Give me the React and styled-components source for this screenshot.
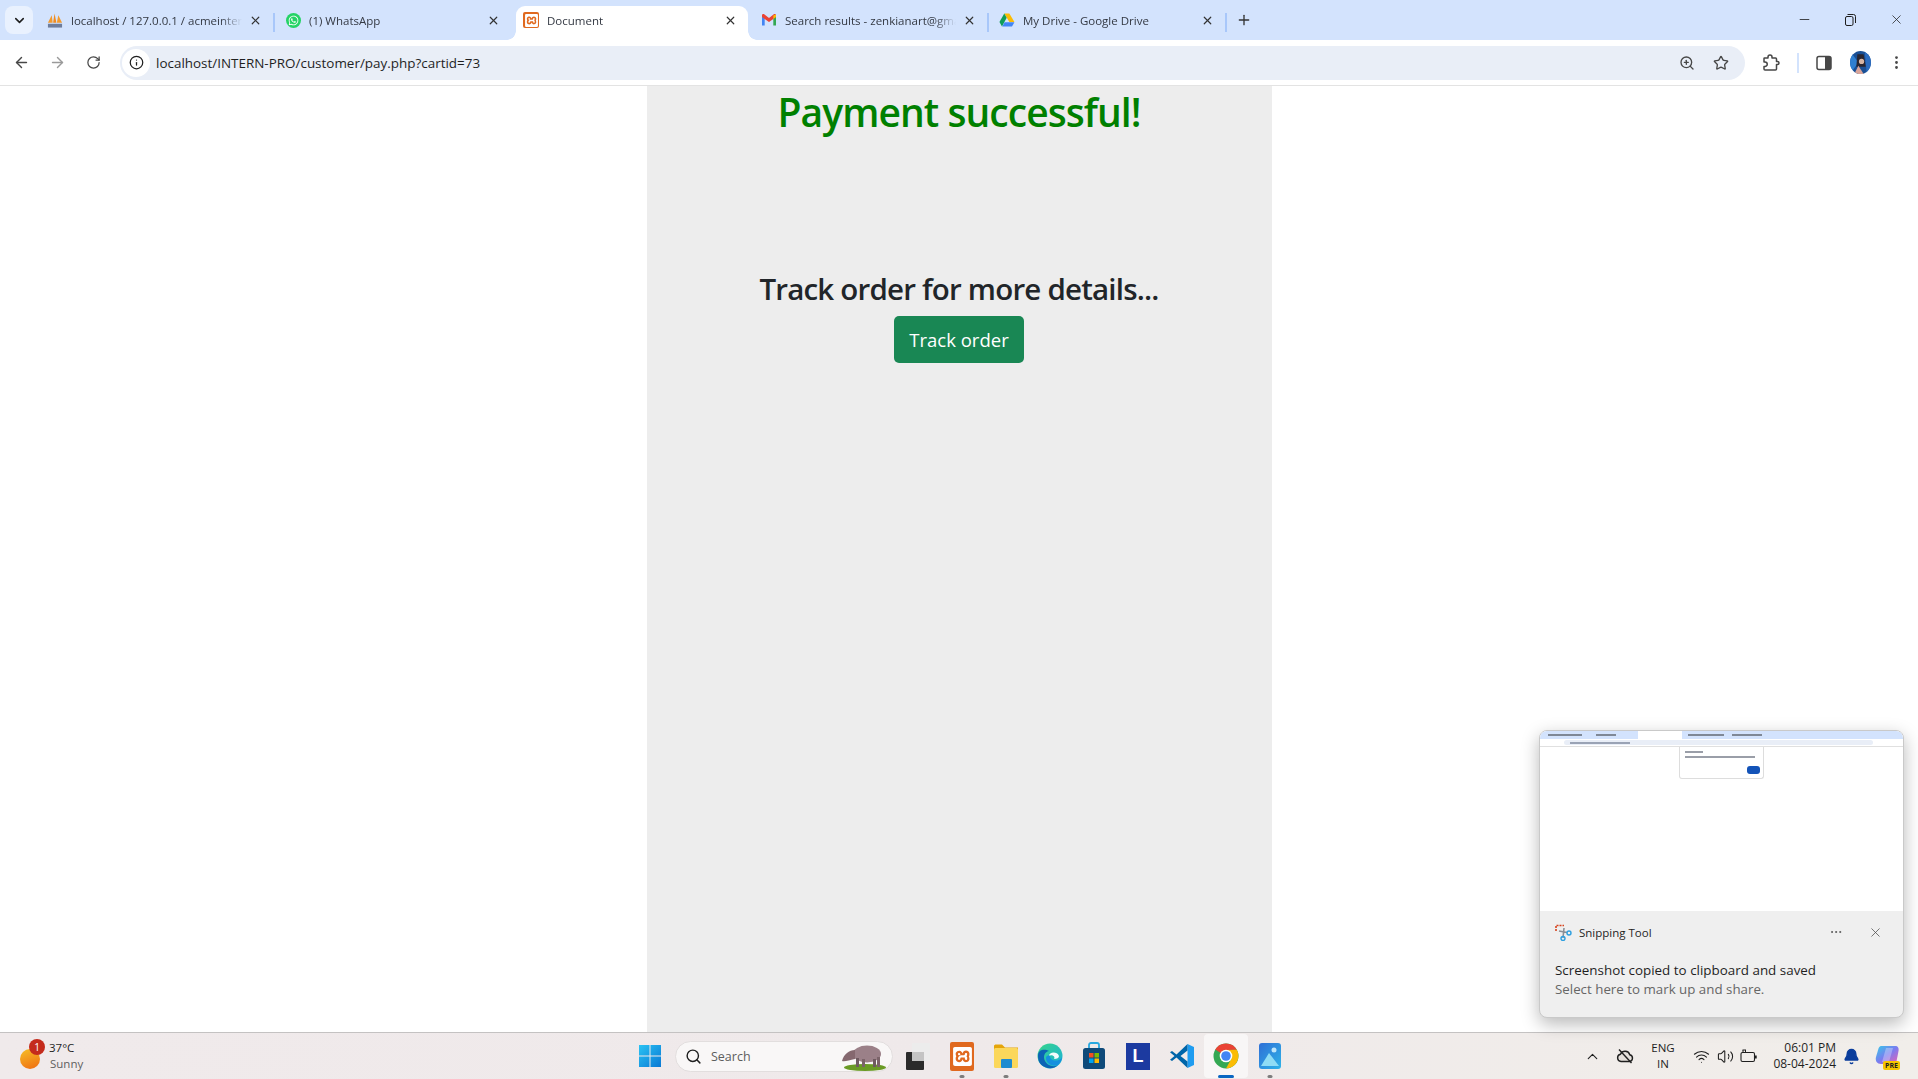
import React from 'react';
import styled, { createGlobalStyle } from 'styled-components';
import {
  ArrowLeft, ArrowRight, RotateCw, Info, ZoomIn, Star, MoreVertical, X, Plus, Minus,
  ChevronDown, ChevronUp, Search, Wifi, Volume2, Bell, MoreHorizontal,
} from 'lucide-react';
import { FaWhatsapp } from 'react-icons/fa';
import { SiXampp } from 'react-icons/si';

const UI_FONT = '"Open Sans", "Noto Sans", sans-serif';

const GlobalStyle = createGlobalStyle`
  html, body { margin: 0; padding: 0; height: 100%; overflow: hidden; background: #fff; }
  #root { height: 100%; }
  * { box-sizing: border-box; }
  body { font-family: ${UI_FONT}; color: #1f1f1f; }
`;

/* ---------- drawn logos ---------- */

const PmaIcon = () => (
  <svg width="17" height="17" viewBox="0 0 17 17">
    <path d="M1 11 L5 3 L6 11Z" fill="#f29a2e" />
    <path d="M6.5 11 L8 1 L10 11Z" fill="#ef8a1f" />
    <path d="M10.5 11 L12 3 L16 11Z" fill="#f29a2e" />
    <rect x="1" y="12" width="15" height="4" fill="#5b6b8c" opacity="0.85" />
  </svg>
);

const GmailIcon = ({ size = 16 }) => (
  <svg width={size} height={size} viewBox="0 0 16 16">
    <path d="M1 3.2 V13.5 H3.7 V6.6Z" fill="#4285f4" />
    <path d="M15 3.2 V13.5 H12.3 V6.6Z" fill="#34a853" />
    <path d="M1 3.5 C1 2 2.6 1.8 3.5 2.5 L8 6 L12.5 2.5 C13.4 1.8 15 2 15 3.5 L15 5 L12.3 7 L8 10 L3.7 7 L1 5Z" fill="#ea4335" />
    <path d="M12.3 3.4 L15 2.6 V5 L12.3 7Z" fill="#fbbc04" />
  </svg>
);

const DriveIcon = () => (
  <svg width="17" height="16" viewBox="0 0 17 16">
    <path d="M5.6 1 H11 L16.4 10 H11Z" fill="#fbbc04" />
    <path d="M5.6 1 L0.5 10 L3.2 15 L8.2 5.5Z" fill="#0f9d58" />
    <path d="M6 10.4 H16.4 L13.8 15 H3.4Z" fill="#4285f4" />
  </svg>
);

const WindowsLogo = () => (
  <svg width="24" height="24" viewBox="0 0 24 24">
    <defs>
      <linearGradient id="win" x1="0" y1="0" x2="1" y2="1">
        <stop offset="0" stopColor="#2bc3f3" />
        <stop offset="1" stopColor="#0a78d4" />
      </linearGradient>
    </defs>
    <path d="M1 1 H11.5 V11.5 H1Z M12.5 1 H23 V11.5 H12.5Z M1 12.5 H11.5 V23 H1Z M12.5 12.5 H23 V23 H12.5Z" fill="url(#win)" />
  </svg>
);

const TapirPicture = () => (
  <svg width="46" height="30" viewBox="0 0 46 30">
    <ellipse cx="24" cy="26.5" rx="21" ry="3.5" fill="#6a9a25" />
    <ellipse cx="26" cy="13" rx="14" ry="8.5" fill="#9b8088" />
    <path d="M14 9 C8 9 3 13 1 20 C4 21 8 19 14 18Z" fill="#85686f" />
    <rect x="15" y="17" width="3" height="9" fill="#6f5a60" />
    <rect x="21" y="18" width="3" height="8" fill="#7b6369" />
    <rect x="32" y="18" width="3" height="8" fill="#6f5a60" />
    <rect x="36" y="16" width="3" height="10" fill="#7b6369" />
  </svg>
);

const TaskView = () => (
  <svg width="26" height="28" viewBox="0 0 26 28">
    <rect x="1" y="10" width="18" height="18" rx="1" fill="#2b2b2b" />
    <rect x="7" y="1" width="18" height="18" rx="1" fill="#ececec" />
    <rect x="7" y="10" width="12" height="9" fill="#c4c4c4" />
  </svg>
);

const XamppTask = () => (
  <OrangeSquare $size={24}><SiXampp size={19} color="#fff" /></OrangeSquare>
);

const FolderIcon = () => (
  <svg width="26" height="26" viewBox="0 0 26 26">
    <path d="M1 3 C1 2 2 1.500 3 1.500 H9 L12 4.500 H25 V7 H1Z" fill="#e5a50a" />
    <rect x="1" y="5" width="24" height="20" rx="1.500" fill="#fbd75b" />
    <rect x="8" y="16" width="11" height="9" rx="1" fill="#1f8bd0" />
  </svg>
);

const EdgeIcon = () => (
  <svg width="26" height="26" viewBox="0 0 26 26">
    <defs>
      <linearGradient id="edgeA" x1="0" y1="0" x2="1" y2="1">
        <stop offset="0" stopColor="#37d58a" />
        <stop offset="1" stopColor="#1bb0d8" />
      </linearGradient>
    </defs>
    <circle cx="13" cy="13" r="12.500" fill="url(#edgeA)" />
    <path d="M1 13 C1 6 8 6 12 8 C7 9 6 14 8 18 C10 22 16 25 21 22 C17 26 12 26 8 24 C3 22 1 18 1 13Z" fill="#0c63b5" />
    <path d="M12 13 C12 9 20 8 22 13 C22 15 20 16 17 16 C19 13 14 11 12 13Z" fill="#fff" opacity="0.95" />
    <path d="M9 15 C9 21 16 24 21 22 C23 20 25 17 25 14 C24 17 20 18 17 17.500 C14 17 13 15 13 13 C11 12 9 13 9 15Z" fill="#1490df" />
  </svg>
);

const StoreIcon = () => (
  <svg width="24" height="28" viewBox="0 0 24 28">
    <path d="M7 7 V3 C7 1.500 8 1 9 1 H15 C16 1 17 1.500 17 3 V7" fill="none" stroke="#28a8e0" strokeWidth="1.800" />
    <rect x="1" y="6" width="22" height="21" rx="2.500" fill="#0f4a7a" />
    <rect x="7" y="11" width="4.500" height="4.500" fill="#f25022" />
    <rect x="12.500" y="11" width="4.500" height="4.500" fill="#7fba00" />
    <rect x="7" y="16.500" width="4.500" height="4.500" fill="#00a4ef" />
    <rect x="12.500" y="16.500" width="4.500" height="4.500" fill="#ffb900" />
  </svg>
);

const VsCodeIcon = () => (
  <svg width="26" height="26" viewBox="0 0 26 26">
    <path d="M18.500 1 L25 4 V22 L18.500 25 L18.500 1Z" fill="#1f9cf0" />
    <path d="M18.500 1 L7.500 11.500 L3 8 L1 9.200 L5.500 13 L1 16.800 L3 18 L7.500 14.500 L18.500 25 V18.500 L11.500 13 L18.500 7.500Z" fill="#0065a9" />
  </svg>
);

const ChromeIcon = () => (
  <svg width="26" height="26" viewBox="0 0 26 26">
    <circle cx="13" cy="13" r="12.500" fill="#34a853" />
    <path d="M13 .5 A12.500 12.500 0 0 1 23.800 6.800 L13 7 A6 6 0 0 0 7.800 10 L2.200 6.600 A12.500 12.500 0 0 1 13 .5Z" fill="#ea4335" />
    <path d="M23.800 6.800 A12.500 12.500 0 0 1 13 25.500 L18.200 16 A6 6 0 0 0 18.200 10 L13 7Z" fill="#fbbc04" />
    <circle cx="13" cy="13" r="6.300" fill="#fff" />
    <circle cx="13" cy="13" r="4.800" fill="#4285f4" />
  </svg>
);

const PhotosIcon = () => (
  <svg width="22" height="28" viewBox="0 0 22 28">
    <defs>
      <linearGradient id="ph" x1="0" y1="0" x2="1" y2="1">
        <stop offset="0" stopColor="#2f6fd6" />
        <stop offset="1" stopColor="#2fb3e8" />
      </linearGradient>
    </defs>
    <rect x="0" y="1" width="22" height="26" rx="3" fill="url(#ph)" />
    <circle cx="15" cy="8" r="2.500" fill="#bfe6fa" />
    <path d="M2 24 L10 11 L20 24Z" fill="#8fdcf5" />
  </svg>
);

const SnipIcon = () => (
  <svg width="17" height="17" viewBox="0 0 17 17">
    <path d="M1 7 V1.500 H9" fill="none" stroke="#d7421b" strokeWidth="1.600" strokeDasharray="2 1" />
    <path d="M4 7 L12 8.500 M9 4 L8 14" stroke="#8a8f96" strokeWidth="1.600" />
    <circle cx="14" cy="9" r="2" fill="none" stroke="#2d9fe0" strokeWidth="1.400" />
    <circle cx="8" cy="14.500" r="2" fill="none" stroke="#2d9fe0" strokeWidth="1.400" />
  </svg>
);

const CopilotIcon = () => (
  <svg width="24" height="22" viewBox="0 0 24 22">
    <defs>
      <linearGradient id="cop" x1="0" y1="0" x2="1" y2="1">
        <stop offset="0" stopColor="#36c9e8" />
        <stop offset="0.5" stopColor="#7a7cf0" />
        <stop offset="1" stopColor="#ee5fb0" />
      </linearGradient>
    </defs>
    <path d="M6 1 H20 C23 1 24 3 23.500 6 L21 19 H6 C2 19 0 16 1 12 L3.500 3.500 C4 2 5 1 6 1Z" fill="url(#cop)" />
    <path d="M11 3 H18 L14 17 H7Z" fill="#fff" opacity="0.3" />
  </svg>
);

const SidePanelIcon = () => (
  <svg width="16" height="16" viewBox="0 0 16 16">
    <rect x="1" y="1.500" width="14" height="13" rx="2" fill="#fff" stroke="#474747" strokeWidth="1.500" />
    <path d="M9 1.500 H13 A2 2 0 0 1 15 3.500 V12.500 A2 2 0 0 1 13 14.500 H9Z" fill="#474747" />
  </svg>
);

const ExtensionIcon = () => (
  <svg width="18" height="18" viewBox="0 0 18 18">
    <path
      d="M2.500 4 H6 V3 A2 2 0 0 1 10 3 V4 H13.500 A1 1 0 0 1 14.500 5 V7.500 H15.500 A1.500 1.500 0 0 1 15.500 10.500 H14.500 V15 A1 1 0 0 1 13.500 16 H3 A1 1 0 0 1 2 15 V12.500 H3 A2 2 0 0 0 3 8 H2 V4.500 A.5 .5 0 0 1 2.500 4Z"
      fill="none"
      stroke="#474747"
      strokeWidth="1.500"
      strokeLinejoin="round"
    />
  </svg>
);

const CloudSlashIcon = () => (
  <svg width="18" height="16" viewBox="0 0 18 16">
    <path d="M5 13.500 A3.700 3.700 0 0 1 4.500 6.200 A5 5 0 0 1 13.800 6.800 A3.400 3.400 0 0 1 13.500 13.500Z" fill="#e4dfdb" stroke="#1f1f1f" strokeWidth="1.400" />
    <path d="M3 1.500 L15.500 15" stroke="#1f1f1f" strokeWidth="1.400" />
  </svg>
);

const BatteryIcon = () => (
  <svg width="18" height="16" viewBox="0 0 18 16">
    <rect x="1" y="4.500" width="13.500" height="9" rx="1.500" fill="none" stroke="#1f1f1f" strokeWidth="1.100" />
    <rect x="15" y="7.500" width="1.700" height="3" fill="#1f1f1f" />
    <path d="M3 5 V2 M5.500 5 V2 M2.500 2 H6" stroke="#1f1f1f" strokeWidth="1" />
  </svg>
);

const RestoreIcon = () => (
  <svg width="11" height="12" viewBox="0 0 11 12">
    <rect x="0.500" y="2.500" width="7.500" height="9" rx="1.500" fill="none" stroke="#1f1f1f" />
    <path d="M2.500 .5 H8.500 A2 2 0 0 1 10.500 2.500 V9" fill="none" stroke="#1f1f1f" />
  </svg>
);

const Avatar = () => (
  <svg width="21" height="23" viewBox="0 0 20 22">
    <defs><clipPath id="av"><ellipse cx="10" cy="11" rx="10" ry="11" /></clipPath></defs>
    <g clipPath="url(#av)">
      <rect width="20" height="22" fill="#1a4f94" />
      <path d="M0 0 L8 11 L0 22Z" fill="#2f7fd0" />
      <path d="M7 3 H13 L15 15 H6Z" fill="#2a2630" />
      <circle cx="11" cy="10" r="2.500" fill="#d8b5a3" />
      <path d="M4 22 L8 14 L13 22Z" fill="#d8a59a" />
      <path d="M14 0 L20 6 V22 H16Z" fill="#2b6cc0" />
    </g>
  </svg>
);

/* ---------- browser chrome ---------- */

const Screen = styled.div`
  height: 100vh;
  display: flex;
  flex-direction: column;
  position: relative;
  overflow: hidden;
`;

const TabStrip = styled.div`
  height: 40px;
  flex: none;
  background: #d3e3fd;
  display: flex;
  align-items: flex-end;
`;

const TabSearch = styled.div`
  width: 28px;
  height: 28px;
  margin: 0 4px 6px 5px;
  border-radius: 8px;
  background: #e9f1fe;
  display: flex;
  align-items: center;
  justify-content: center;
  color: #1f1f1f;
`;

const Tab = styled.div`
  width: ${(p) => (p.$active ? 232 : 238)}px;
  height: 34px;
  flex: none;
  margin: 0 ${(p) => (p.$active ? 3 : 0)}px;
  display: flex;
  align-items: center;
  padding: 0 ${(p) => (p.$active ? 2 : 4)}px 6px ${(p) => (p.$active ? 7 : 10)}px;
  position: relative;
  background: ${(p) => (p.$active ? '#fff' : 'transparent')};
  border-radius: 9px 9px 0 0;
  ${(p) => p.$active && `
    &::before, &::after {
      content: '';
      position: absolute;
      bottom: 0;
      width: 9px;
      height: 9px;
      background: radial-gradient(circle at 0 0, #d3e3fd 8.5px, #fff 9px);
    }
    &::before { left: -9px; }
    &::after { right: -9px; background: radial-gradient(circle at 100% 0, #d3e3fd 8.5px, #fff 9px); }
  `}
  ${(p) => p.$divider && `
    &::after {
      content: '';
      position: absolute;
      right: 0;
      top: 7px;
      width: 2px;
      height: 19px;
      background: #a8c7fa;
    }
  `}
`;

const TabIcon = styled.span`
  width: 16px;
  height: 16px;
  flex: none;
  display: flex;
  align-items: center;
  justify-content: center;
`;

const TabTitle = styled.span`
  padding-left: 8px;
  flex: 1;
  min-width: 0;
  font-size: 11.5px;
  color: #333842;
  white-space: nowrap;
  overflow: hidden;
  -webkit-mask-image: linear-gradient(to right, #000 88%, transparent 100%);
  mask-image: linear-gradient(to right, #000 88%, transparent 100%);
`;

const TabClose = styled.span`
  width: 16px;
  margin: 0 7.5px 0 6px;
  flex: none;
  display: flex;
  justify-content: center;
  color: #333;
`;

const WhatsappBadge = styled.span`
  width: 15px;
  height: 15px;
  border-radius: 50%;
  background: #25d366;
  color: #fff;
  display: flex;
  align-items: center;
  justify-content: center;
`;

const OrangeSquare = styled.span`
  width: ${(p) => p.$size}px;
  height: ${(p) => p.$size + (p.$size > 20 ? 5 : 0)}px;
  border-radius: 2px;
  background: #e0691f;
  display: flex;
  align-items: center;
  justify-content: center;
`;

const NewTab = styled.div`
  width: 34px;
  height: 34px;
  padding-bottom: 6px;
  display: flex;
  align-items: center;
  justify-content: center;
  color: #333;
`;

const WindowControls = styled.div`
  margin-left: auto;
  height: 40px;
  display: flex;
  margin-right: -1px;
`;

const WindowButton = styled.div`
  width: 46px;
  height: 40px;
  padding-bottom: 1px;
  display: flex;
  align-items: center;
  justify-content: center;
  color: #1f1f1f;
`;

const Toolbar = styled.div`
  height: 46px;
  flex: none;
  background: #fff;
  border-bottom: 1px solid #e3e3e3;
  padding: 0 4px 0 3px;
  display: flex;
  align-items: center;
`;

const NavButton = styled.div`
  width: 36px;
  height: 34px;
  flex: none;
  display: flex;
  align-items: center;
  justify-content: center;
  color: ${(p) => (p.$off ? '#9a9a9a' : '#474747')};
`;

const AddressBar = styled.div`
  flex: 1;
  height: 34px;
  margin: 0 8px 0 9px;
  border-radius: 17px;
  background: #e9eef7;
  display: flex;
  align-items: center;
  padding: 0 7px 0 2px;
`;

const SiteInfo = styled.div`
  width: 28px;
  height: 28px;
  border-radius: 50%;
  background: #fff;
  display: flex;
  align-items: center;
  justify-content: center;
  color: #1f1f1f;
`;

const Url = styled.span`
  margin-left: 6px;
  flex: 1;
  font-size: 13.45px;
  color: #1f1f1f;
`;

const AddressAction = styled.div`
  width: 34px;
  display: flex;
  justify-content: center;
  color: #474747;
`;

const ToolbarDivider = styled.div`
  width: 17px;
  display: flex;
  justify-content: center;
  &::before {
    content: '';
    width: 2px;
    height: 20px;
    background: #d3e3fd;
  }
`;

/* ---------- page ---------- */

const Page = styled.main`
  flex: 1;
  min-height: 0;
  background: #fff;
  display: flex;
  justify-content: center;
`;

const Panel = styled.div`
  width: 625px;
  padding-top: 2px;
  background: #ededed;
  text-align: center;
`;

const SuccessTitle = styled.h1`
  margin: 0 0 134px;
  font-size: 39px;
  line-height: 48px;
  font-weight: 600;
  color: #008000;
  letter-spacing: -0.95px;
`;

const DetailsTitle = styled.h2`
  margin: 0 0 8px;
  font-size: 29.5px;
  line-height: 38px;
  font-weight: 600;
  color: #212529;
  letter-spacing: -0.8px;
`;

const TrackButton = styled.button`
  width: 130px;
  height: 47px;
  border: none;
  border-radius: 5px;
  background: #198754;
  color: #fff;
  font-family: ${UI_FONT};
  font-size: 18.5px;
`;

/* ---------- taskbar ---------- */

const Taskbar = styled.footer`
  height: 47px;
  flex: none;
  border-top: 1px solid #c4c2c2;
  background: linear-gradient(to right, #f0eaeb, #efe9ea 50%, #f1eeea);
  display: flex;
  align-items: center;
  position: relative;
`;

const Weather = styled.div`
  width: 628px;
  flex: none;
  display: flex;
  align-items: center;
  padding-left: 20px;
`;

const Sun = styled.div`
  width: 20px;
  height: 20px;
  margin-top: 5px;
  border-radius: 50%;
  background: linear-gradient(160deg, #f6bf26, #ef6c12);
  position: relative;
`;

const WeatherBadge = styled.span`
  position: absolute;
  top: -10px;
  left: 9px;
  width: 16px;
  height: 16px;
  border-radius: 50%;
  background: #c42b1c;
  color: #fff;
  font-size: 10px;
  line-height: 16px;
  text-align: center;
`;

const WeatherText = styled.div`
  margin-left: 9px;
  font-size: 11.5px;
  line-height: 16px;
`;

const Muted = styled.div`
  color: #5f5f5f;
  margin-left: 1px;
`;

const TaskIcons = styled.div`
  display: flex;
  align-items: center;
`;

const StartButton = styled.div`
  width: 44px;
  display: flex;
  justify-content: center;
`;

const SearchPill = styled.div`
  width: 218px;
  height: 31px;
  margin: 0 3px;
  border-radius: 16px;
  background: #f9f7f7;
  border: 1px solid #e2dede;
  display: flex;
  align-items: center;
  padding: 0 5px 0 9px;
  color: #1f1f1f;
`;

const SearchLabel = styled.span`
  flex: 1;
  margin-left: 9px;
  font-size: 12.5px;
  color: #5d5d5d;
`;

const TaskItem = styled.div`
  width: 44px;
  height: 44px;
  display: flex;
  align-items: center;
  justify-content: center;
  position: relative;
  border-radius: 4px;
  background: ${(p) => (p.$active ? '#f8f6f6' : 'transparent')};
  &::after {
    content: '';
    display: ${(p) => (p.$running ? 'block' : 'none')};
    position: absolute;
    bottom: 0;
    left: 50%;
    transform: translateX(-50%);
    width: ${(p) => (p.$active ? 16 : 5)}px;
    height: 3px;
    border-radius: 2px;
    background: ${(p) => (p.$active ? '#0a67c2' : '#7d7d7d')};
  }
`;

const LetterTile = styled.span`
  width: 24px;
  height: 27px;
  background: #1c3aa0;
  color: #fff;
  font-family: "Liberation Sans", sans-serif;
  font-weight: 700;
  font-size: 18px;
  display: flex;
  align-items: center;
  justify-content: center;
`;

const Tray = styled.div`
  margin-left: auto;
  display: flex;
  align-items: center;
  color: #1f1f1f;
`;

const TrayIcon = styled.div`
  width: ${(p) => p.$w || 24}px;
  margin-right: ${(p) => p.$mr || 0}px;
  display: flex;
  justify-content: center;
  position: relative;
`;

const TrayText = styled.div`
  font-size: ${(p) => p.$size || 11.5}px;
  line-height: 16px;
  white-space: nowrap;
  text-align: ${(p) => p.$align || 'center'};
  width: ${(p) => p.$w}px;
  margin-right: ${(p) => p.$mr || 0}px;
`;

const BellIcon = styled(TrayIcon)`
  color: #0a3d9c;
`;

const PreTag = styled.span`
  position: absolute;
  right: 0;
  bottom: -3px;
  width: 17px;
  height: 9px;
  border-radius: 2px;
  background: #f7c600;
  color: #1f1f1f;
  font-size: 7px;
  font-weight: 700;
  line-height: 9px;
  text-align: center;
`;

/* ---------- snipping tool toast ---------- */

const Toast = styled.aside`
  position: absolute;
  left: 1539px;
  top: 730px;
  width: 365px;
  height: 288px;
  border-radius: 8px;
  overflow: hidden;
  background: #efefef;
  border: 1px solid #c9c9c9;
  box-shadow: 0 6px 18px rgba(0, 0, 0, 0.28);
  display: flex;
  flex-direction: column;
`;

const Thumb = styled.div`
  height: 180px;
  flex: none;
  background: #fff;
  position: relative;
`;

const ThumbStrip = styled.div`
  height: 8px;
  background: #d3e3fd;
  display: flex;
  align-items: center;
  padding-left: 8px;
`;

const ThumbTabMark = styled.div`
  width: ${(p) => p.$w}px;
  height: ${(p) => (p.$active ? 8 : 2)}px;
  margin-right: ${(p) => p.$gap}px;
  background: ${(p) => (p.$active ? '#fff' : '#7f8896')};
`;

const ThumbBar = styled.div`
  height: 8px;
  border-bottom: 1px solid #e0e0e0;
  padding: 1px 30px 1px 24px;
  display: flex;
`;

const ThumbAddress = styled.div`
  flex: 1;
  border-radius: 3px;
  background: #e9eef7;
  padding: 2px 0 0 6px;
  &::before {
    content: '';
    display: block;
    width: 60px;
    height: 2px;
    background: #9aa3b5;
  }
`;

const ThumbCard = styled.div`
  position: absolute;
  left: 139px;
  top: 16px;
  width: 85px;
  height: 32px;
  background: #fff;
  border: 1px solid #ddd;
  border-top: none;
  border-radius: 0 0 3px 3px;
  padding: 4px 5px;
`;

const ThumbLine = styled.div`
  width: ${(p) => p.$w}px;
  height: 2px;
  margin-bottom: 3px;
  background: #9a9ea8;
`;

const ThumbButton = styled.div`
  position: absolute;
  right: 3px;
  bottom: 4px;
  width: 13px;
  height: 8px;
  border-radius: 3px;
  background: #1353b8;
`;

const ToastBody = styled.div`
  flex: 1;
  padding: 12px 15px;
`;

const ToastHead = styled.div`
  height: 18px;
  display: flex;
  align-items: center;
  color: #4a4a4a;
`;

const ToastApp = styled.span`
  flex: 1;
  margin-left: 7px;
  font-size: 11.5px;
  color: #1f1f1f;
`;

const ToastDots = styled.span`
  display: flex;
  margin-right: 3px;
`;

const ToastClose = styled.span`
  margin: 0 5px 0 22px;
  display: flex;
`;

const ToastTitle = styled.div`
  margin-top: 20px;
  font-size: 13.4px;
  line-height: 19px;
  letter-spacing: 0.01px;
  color: #1f1f1f;
`;

const ToastHint = styled.div`
  font-size: 13.3px;
  line-height: 19px;
  letter-spacing: 0.01px;
  color: #666;
`;

const tabs = [
  { title: 'localhost / 127.0.0.1 / acmeinter', icon: <PmaIcon />, divider: true },
  { title: '(1) WhatsApp', icon: <WhatsappBadge><FaWhatsapp size={11} /></WhatsappBadge> },
  { title: 'Document', icon: <OrangeSquare $size={16}><SiXampp size={13} color="#fff" /></OrangeSquare>, active: true },
  { title: 'Search results - zenkianart@gmail.com', icon: <GmailIcon />, divider: true },
  { title: 'My Drive - Google Drive', icon: <DriveIcon />, divider: true },
];

const taskApps = [
  { key: 'taskview', icon: <TaskView /> },
  { key: 'xampp', icon: <XamppTask />, running: true },
  { key: 'files', icon: <FolderIcon />, running: true },
  { key: 'edge', icon: <EdgeIcon /> },
  { key: 'store', icon: <StoreIcon /> },
  { key: 'lens', icon: <LetterTile>L</LetterTile> },
  { key: 'vscode', icon: <VsCodeIcon /> },
  { key: 'chrome', icon: <ChromeIcon />, running: true, active: true },
  { key: 'photos', icon: <PhotosIcon />, running: true },
];

const thumbMarks = [
  { w: 34, gap: 14 },
  { w: 20, gap: 22 },
  { w: 44, gap: 6, active: true },
  { w: 36, gap: 8 },
  { w: 30, gap: 0 },
];

const App = function () {
  return (
    <Screen>
      <GlobalStyle />
      <TabStrip>
        <TabSearch><ChevronDown size={15} strokeWidth={2.5} /></TabSearch>
        {tabs.map((tab) => (
          <Tab key={tab.title} $active={tab.active} $divider={tab.divider}>
            <TabIcon>{tab.icon}</TabIcon>
            <TabTitle>{tab.title}</TabTitle>
            <TabClose><X size={13} strokeWidth={2.2} /></TabClose>
          </Tab>
        ))}
        <NewTab><Plus size={16} strokeWidth={2} /></NewTab>
        <WindowControls>
          <WindowButton><Minus size={15} strokeWidth={1.3} /></WindowButton>
          <WindowButton><RestoreIcon /></WindowButton>
          <WindowButton><X size={15} strokeWidth={1.2} /></WindowButton>
        </WindowControls>
      </TabStrip>

      <Toolbar>
        <NavButton><ArrowLeft size={17} strokeWidth={2} /></NavButton>
        <NavButton $off><ArrowRight size={17} strokeWidth={2} /></NavButton>
        <NavButton><RotateCw size={15} strokeWidth={2} /></NavButton>
        <AddressBar>
          <SiteInfo><Info size={15} strokeWidth={2} /></SiteInfo>
          <Url>localhost/INTERN-PRO/customer/pay.php?cartid=73</Url>
          <AddressAction><ZoomIn size={16} strokeWidth={2} /></AddressAction>
          <AddressAction><Star size={16} strokeWidth={2} /></AddressAction>
        </AddressBar>
        <NavButton><ExtensionIcon /></NavButton>
        <ToolbarDivider />
        <NavButton><SidePanelIcon /></NavButton>
        <NavButton><Avatar /></NavButton>
        <NavButton><MoreVertical size={17} strokeWidth={2} /></NavButton>
      </Toolbar>

      <Page>
        <Panel>
          <SuccessTitle>Payment successful!</SuccessTitle>
          <DetailsTitle>Track order for more details...</DetailsTitle>
          <TrackButton>Track order</TrackButton>
        </Panel>
      </Page>

      <Taskbar>
        <Weather>
          <Sun><WeatherBadge>1</WeatherBadge></Sun>
          <WeatherText>
            <div>37°C</div>
            <Muted>Sunny</Muted>
          </WeatherText>
        </Weather>
        <TaskIcons>
          <StartButton><WindowsLogo /></StartButton>
          <SearchPill>
            <Search size={17} strokeWidth={2} />
            <SearchLabel>Search</SearchLabel>
            <TapirPicture />
          </SearchPill>
          {taskApps.map((app) => (
            <TaskItem key={app.key} $running={app.running} $active={app.active}>{app.icon}</TaskItem>
          ))}
        </TaskIcons>
        <Tray>
          <TrayIcon $mr={9}><ChevronUp size={17} strokeWidth={1.6} /></TrayIcon>
          <TrayIcon $mr={6}><CloudSlashIcon /></TrayIcon>
          <TrayText $w={40} $mr={6}>ENG<br />IN</TrayText>
          <TrayIcon><Wifi size={17} strokeWidth={1.5} /></TrayIcon>
          <TrayIcon><Volume2 size={17} strokeWidth={1.5} /></TrayIcon>
          <TrayIcon $mr={3}><BatteryIcon /></TrayIcon>
          <TrayText $w={72} $size={12} $align="right" $mr={3}>06:01 PM<br />08-04-2024</TrayText>
          <BellIcon $mr={11}><Bell size={17} fill="#0a3d9c" /></BellIcon>
          <TrayIcon $w={26} $mr={18}>
            <CopilotIcon />
            <PreTag>PRE</PreTag>
          </TrayIcon>
        </Tray>
      </Taskbar>

      <Toast>
        <Thumb>
          <ThumbStrip>
            {thumbMarks.map((mark) => (
              <ThumbTabMark key={mark.w + mark.gap} $w={mark.w} $gap={mark.gap} $active={mark.active} />
            ))}
          </ThumbStrip>
          <ThumbBar><ThumbAddress /></ThumbBar>
          <ThumbCard>
            <ThumbLine $w={18} />
            <ThumbLine $w={70} />
            <ThumbButton />
          </ThumbCard>
        </Thumb>
        <ToastBody>
          <ToastHead>
            <SnipIcon />
            <ToastApp>Snipping Tool</ToastApp>
            <ToastDots><MoreHorizontal size={14} strokeWidth={1.4} /></ToastDots>
            <ToastClose><X size={15} strokeWidth={1.2} /></ToastClose>
          </ToastHead>
          <ToastTitle>Screenshot copied to clipboard and saved</ToastTitle>
          <ToastHint>Select here to mark up and share.</ToastHint>
        </ToastBody>
      </Toast>
    </Screen>
  );
};

export default App;
